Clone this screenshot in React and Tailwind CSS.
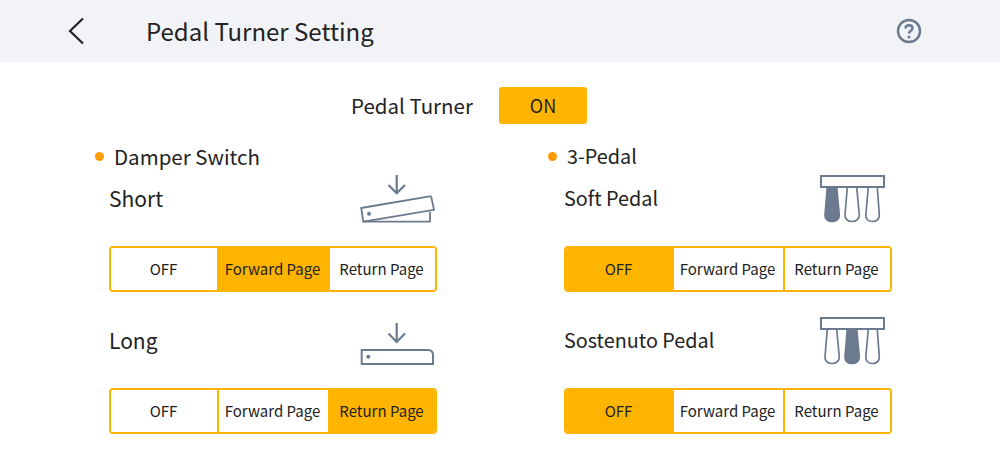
const font = { fontFamily: '"Noto Sans CJK JP", "Noto Sans", sans-serif' };

function ShortIcon() {
  return (
    <svg width="76" height="48" viewBox="0 0 76 48" fill="none" stroke="#6b7a8f" strokeWidth="1.800" className="mt-[2px]">
      <path d="M36.700 0v18M28.500 10l8.200 8.200L45 10" strokeWidth="2.200" />
      <path d="M1.200 33 69.500 21.300c1-.2 1.700.4 1.900 1.300L74 34.800 3.300 46.700Z" />
      <path d="M3.300 46.700H70V36.700" />
      <circle cx="9" cy="38.700" r="2" fill="#6b7a8f" stroke="none" />
    </svg>
  );
}

function LongIcon() {
  return (
    <svg width="76" height="43" viewBox="0 0 76 43" fill="none" stroke="#6b7a8f" strokeWidth="2" className="mt-[8px]">
      <path d="M36.700 0v19M28.500 10.500l8.200 8.500 8.300-8.500" strokeWidth="2.200" />
      <path d="M1.700 27H68c3 0 5 2 5 5v9H1.700Z" />
      <circle cx="8.300" cy="33.700" r="2" fill="#6b7a8f" stroke="none" />
    </svg>
  );
}

function PedalIcon({ active }) {
  const pedals = [
    "M7.300 12 5 40c-.3 4 3 6.500 7 6.500s7.600-2.500 7.300-6.500L16.700 12",
    "M27.300 12 25 40c-.3 4 3 6.500 7 6.500s7.600-2.500 7.300-6.500L36.700 12",
    "M48.300 12 45.800 40c-.3 4 2.700 6.500 6.700 6.500s7.100-2.500 6.800-6.500L57.300 12",
  ];
  return (
    <svg width="66" height="48" viewBox="0 0 66 48" fill="none" stroke="#6b7a8f" strokeWidth="1.700" className="mt-[2px]">
      <rect x="1" y="1" width="63" height="11" strokeWidth="2" />
      {pedals.map((d, i) => (
        <path key={i} d={d} fill={i === active ? "#6b7a8f" : "none"} />
      ))}
    </svg>
  );
}

function Segment({ selected }) {
  const cells = [
    { text: "OFF", size: "w-[106px] pr-[1px]" },
    { text: "Forward Page", size: "w-[111px] border-l-2 border-[#ffb500] pr-[2px]" },
    { text: "Return Page", size: "flex-1 border-l-2 border-[#ffb500] pr-[2px]" },
  ];
  return (
    <div className="flex h-[46px] w-[328px] overflow-hidden rounded-[4px] border-2 border-[#ffb500]">
      {cells.map((cell, i) => (
        <div
          key={cell.text}
          className={`flex items-center justify-center whitespace-nowrap text-[15px] text-[#222] ${cell.size} ${i === selected ? "bg-[#ffb500]" : "bg-white"}`}
        >
          {cell.text}
        </div>
      ))}
    </div>
  );
}

function Setting({ label, icon, selected, labelClass, iconPad }) {
  return (
    <div className="flex flex-col">
      <div className={`flex h-[73px] items-start justify-between ${iconPad}`}>
        <span className={`flex items-center text-[#222] ${labelClass}`}>{label}</span>
        {icon}
      </div>
      <Segment selected={selected} />
    </div>
  );
}

export default function App() {
  return (
    <div style={font} className="h-[462px] w-[1000px] overflow-hidden bg-white text-[#222]">
      <header className="flex h-[62px] items-center justify-between bg-[#f1f3f6] pl-[66px] pr-[78px]">
        <div className="flex items-center gap-[60px]">
          <svg width="20" height="28" viewBox="0 0 20 28" fill="none" stroke="#222" strokeWidth="2.200">
            <path d="M17 1.500 4 14l13 12.500" />
          </svg>
          <h1 className="text-[24px] font-normal">Pedal Turner Setting</h1>
        </div>
        <svg width="26" height="26" viewBox="0 0 26 26" fill="none" stroke="#6b7a8f" strokeWidth="2.500">
          <circle cx="13" cy="13" r="11" />
          <path d="M9.500 10.500c0-2 1.500-3.300 3.500-3.300s3.500 1.200 3.500 3c0 2.600-3.500 2.600-3.500 5.300" />
          <circle cx="13" cy="19" r="1.500" fill="#6b7a8f" stroke="none" />
        </svg>
      </header>
      <div className="mt-[25px] flex h-[37px] items-center pl-[351px]">
        <span className="w-[122px] whitespace-nowrap text-[20.500px]">Pedal Turner</span>
        <div className="ml-[26px] flex h-[37px] w-[88px] items-center justify-center rounded-[3px] bg-[#ffb500] text-[18px]">ON</div>
      </div>
      <div className="mt-[16px] flex pl-[95px]">
        <section className="w-[342px]">
          <div className="flex h-[33px] items-center gap-[10px]">
            <span className="size-[9px] rounded-full bg-[#ff9a00]" />
            <span className="text-[20.500px]">Damper Switch</span>
          </div>
          <div className="flex flex-col pl-[14px]">
            <Setting label="Short" icon={<ShortIcon />} selected={1} labelClass="h-[52px] text-[21px]" iconPad="pr-[1px]" />
            <div className="mt-[23px]">
              <Setting label="Long" icon={<LongIcon />} selected={2} labelClass="h-[52px] text-[21px]" iconPad="pr-[1px]" />
            </div>
          </div>
        </section>
        <section className="ml-[111px] w-[343px]">
          <div className="flex h-[31px] items-center gap-[10px]">
            <span className="mt-[2px] size-[9px] rounded-full bg-[#ff9a00]" />
            <span className="text-[19.800px]">3-Pedal</span>
          </div>
          <div className="flex flex-col pl-[16px] pt-[2px]">
            <Setting label="Soft Pedal" icon={<PedalIcon active={0} />} selected={0} labelClass="h-[50px] text-[19.800px]" iconPad="pr-[5px]" />
            <div className="mt-[23px]">
              <Setting label="Sostenuto Pedal" icon={<PedalIcon active={1} />} selected={0} labelClass="h-[50px] text-[19.800px]" iconPad="pr-[5px]" />
            </div>
          </div>
        </section>
      </div>
    </div>
  );
}
